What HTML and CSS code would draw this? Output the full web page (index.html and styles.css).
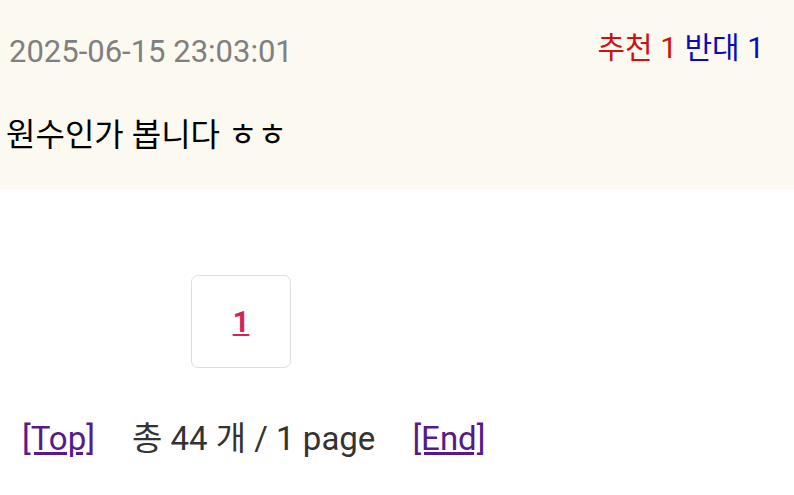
FILE: index.html
```html
<!DOCTYPE html>
<html lang="ko">
<head>
    <meta charset="UTF-8">
    <title>댓글</title>
    <link rel="stylesheet" href="styles.css">
</head>
<body>
    <div class="komentarz">
        <div class="meta">
            <span class="data">2025-06-15 23:03:01</span>
            <span class="glosy"><span class="za">추천 1</span> <span class="przeciw">반대 1</span></span>
        </div>
        <div class="tresc">원수인가 봅니다 ㅎㅎ</div>
    </div>
    <div class="strony">
        <a href="#" class="strona">1</a>
    </div>
    <div class="stopka">
        <a href="#" class="link">[Top]</a>
        <span class="licznik">총 44 개 / 1 page</span>
        <a href="#" class="link">[End]</a>
    </div>
</body>
</html>
```

FILE: styles.css
```css
body {
    margin: 0;
    padding: 0;
    background-color: #ffffff;
    font-family: Roboto, "Noto Sans CJK KR", sans-serif;
}
.komentarz {
    background-color: #fcf9f1;
    padding: 30px 30px 0 6px;
    height: 159px;
}
.meta {
    display: flex;
    justify-content: space-between;
    align-items: flex-start;
    height: 48px;
}
.data {
    color: #808080;
    font-size: 31px;
    padding-left: 3px;
    margin-top: 3px;
}
.glosy {
    font-size: 30px;
    margin-top: -7px;
}
.za {
    color: #c81414;
}
.przeciw {
    color: #0a0ab8;
}
.tresc {
    color: #000000;
    font-size: 32px;
    margin-top: 31px;
}
.strony {
    padding: 86px 0 0 191px;
}
.strona {
    display: flex;
    align-items: center;
    justify-content: center;
    width: 98px;
    height: 91px;
    border: 1px solid #dedede;
    border-radius: 7px;
    color: #d42456;
    font-size: 29px;
    font-weight: bold;
}
.stopka {
    display: flex;
    align-items: baseline;
    gap: 37px;
    padding: 44px 0 0 22px;
    font-size: 33px;
    color: #333333;
}
.link {
    color: #551a8b;
}
```
